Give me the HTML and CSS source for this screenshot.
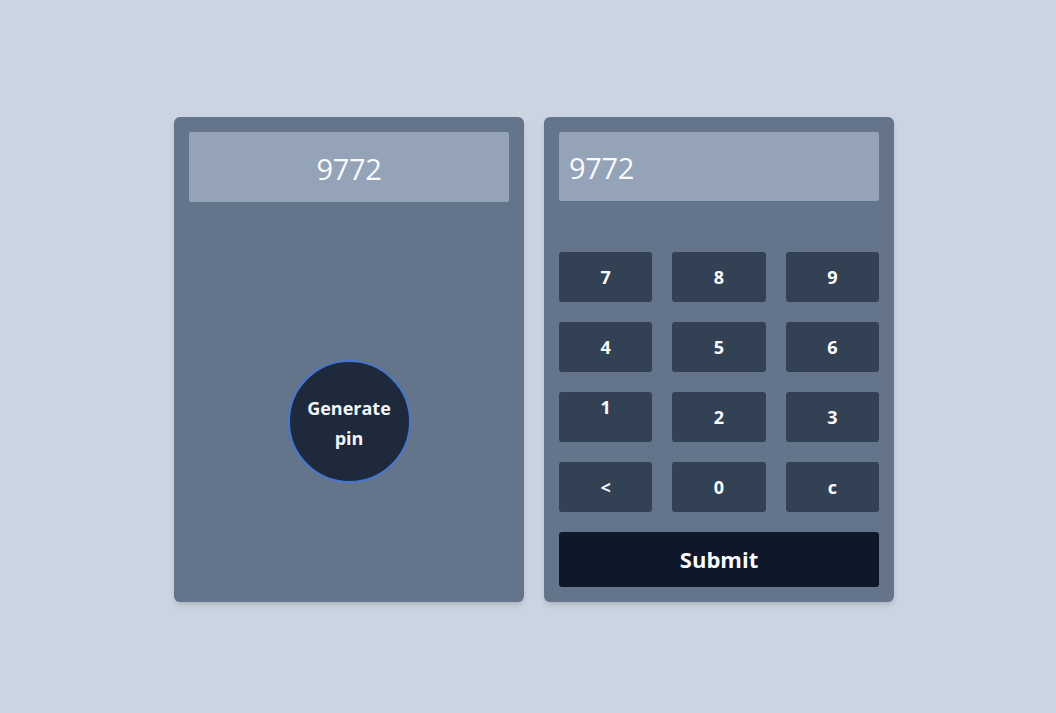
FILE: index.html
```html
<!DOCTYPE html>
<html lang="en">
<head>
<meta charset="utf-8">
<title>Pin Generator</title>
<link rel="stylesheet" href="styles.css">
</head>
<body>
<main class="wrap">
  <section class="card card-left">
    <div class="display display-center">9772</div>
    <div class="gen-area">
      <button class="gen-btn">Generate<br>pin</button>
    </div>
  </section>
  <section class="card card-right">
    <div class="display display-left">9772</div>
    <div class="keypad">
      <button class="key">7</button>
      <button class="key">8</button>
      <button class="key">9</button>
      <button class="key">4</button>
      <button class="key">5</button>
      <button class="key">6</button>
      <button class="key key-top">1</button>
      <button class="key">2</button>
      <button class="key">3</button>
      <button class="key">&lt;</button>
      <button class="key">0</button>
      <button class="key">c</button>
    </div>
    <button class="submit">Submit</button>
  </section>
</main>
</body>
</html>
```
FILE: styles.css
```css
* { box-sizing: border-box; }
html, body { margin: 0; padding: 0; }
body {
  background: #cbd5e1;
  font-family: "Open Sans", "Noto Sans", "Liberation Sans", sans-serif;
  width: 1056px;
  height: 713px;
  overflow: hidden;
}
.wrap {
  display: flex;
  gap: 20px;
  padding-top: 117px;
  padding-left: 174px;
}
.card {
  width: 350px;
  height: 485px;
  background: #64748b;
  border-radius: 6px;
  padding: 15px;
  box-shadow: 0 4px 6px -1px rgba(0,0,0,0.12), 0 2px 4px -2px rgba(0,0,0,0.1);
  display: flex;
  flex-direction: column;
}
.display {
  height: 70px;
  background: #94a3b8;
  border-radius: 2px;
  color: #f8fafc;
  font-size: 29px;
  letter-spacing: -0.3px;
  display: flex;
  align-items: center;
  padding-top: 2px;
}
.display-center { justify-content: center; }
.display-left { padding-left: 10px; }
.gen-area {
  display: flex;
  justify-content: center;
  padding-top: 158px;
}
.gen-btn {
  width: 123px;
  height: 123px;
  border-radius: 50%;
  background: #1e293b;
  border: 2px solid #4677cc;
  color: #f1f5f9;
  font-family: inherit;
  font-weight: 700;
  font-size: 18px;
  line-height: 30px;
  padding: 3px 0 0;
  cursor: pointer;
}
.keypad {
  margin-top: 51px;
  display: grid;
  grid-template-columns: repeat(3, 1fr);
  column-gap: 20px;
  row-gap: 20px;
}
.key {
  height: 50px;
  background: #334155;
  border: none;
  border-radius: 3px;
  color: #f8fafc;
  font-family: inherit;
  font-weight: 700;
  font-size: 18px;
  padding: 0;
  display: flex;
  align-items: center;
  justify-content: center;
}
.key-top { align-items: flex-start; padding-top: 3px; }
.submit {
  margin-top: 20px;
  height: 55px;
  background: #0f172a;
  border: none;
  border-radius: 3px;
  color: #f8fafc;
  font-family: inherit;
  font-weight: 700;
  font-size: 22px;
  padding: 0 0 2px;
}
```
